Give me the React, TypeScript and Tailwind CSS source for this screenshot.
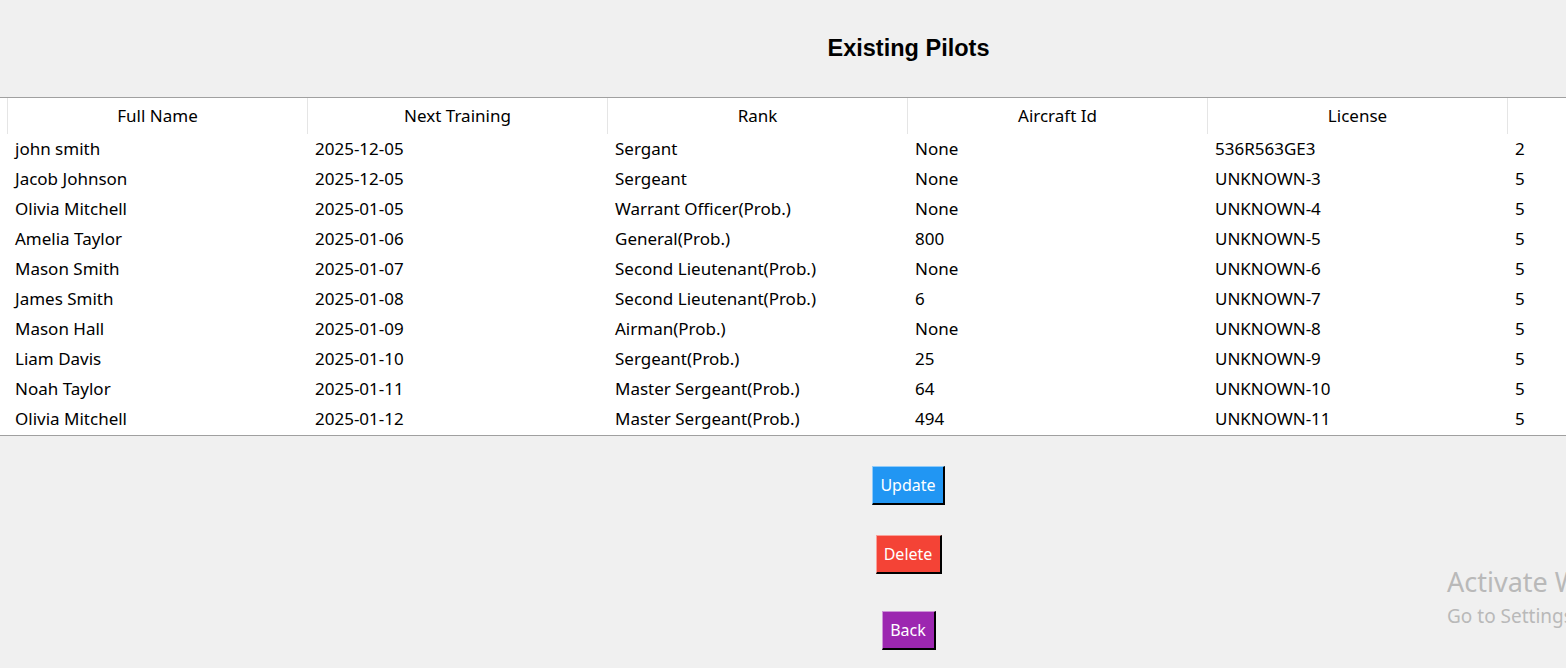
const rows = [
  ["john smith", "2025-12-05", "Sergant", "None", "536R563GE3", "2"],
  ["Jacob Johnson", "2025-12-05", "Sergeant", "None", "UNKNOWN-3", "5"],
  ["Olivia Mitchell", "2025-01-05", "Warrant Officer(Prob.)", "None", "UNKNOWN-4", "5"],
  ["Amelia Taylor", "2025-01-06", "General(Prob.)", "800", "UNKNOWN-5", "5"],
  ["Mason Smith", "2025-01-07", "Second Lieutenant(Prob.)", "None", "UNKNOWN-6", "5"],
  ["James Smith", "2025-01-08", "Second Lieutenant(Prob.)", "6", "UNKNOWN-7", "5"],
  ["Mason Hall", "2025-01-09", "Airman(Prob.)", "None", "UNKNOWN-8", "5"],
  ["Liam Davis", "2025-01-10", "Sergeant(Prob.)", "25", "UNKNOWN-9", "5"],
  ["Noah Taylor", "2025-01-11", "Master Sergeant(Prob.)", "64", "UNKNOWN-10", "5"],
  ["Olivia Mitchell", "2025-01-12", "Master Sergeant(Prob.)", "494", "UNKNOWN-11", "5"],
];

const headers = ["Full Name", "Next Training", "Rank", "Aircraft Id", "License", ""];

export default function App() {
  return (
    <div className="w-[1566px] h-[668px] overflow-hidden bg-[#f0f0f0] relative font-['Noto_Sans',sans-serif] text-[17px] text-black">
      <div className="w-[1817px] flex flex-col items-center">
        {/* title */}
        <div className="h-[97px] flex items-center justify-center pt-[1px]">
          <h1 className="font-['Liberation_Sans',Arial,sans-serif] font-bold text-[23.5px] text-black">Existing Pilots</h1>
        </div>

        {/* treeview */}
        <div className="w-full bg-white border-t border-b border-[#a0a0a0]">
          <div className="grid grid-cols-[8px_repeat(5,300px)_1fr] h-[36px]">
            <div className="border-r border-[#e5e5e5]" />
            {headers.map((h, i) => (
              <div key={i} className="flex items-center justify-center border-r border-[#e5e5e5]">{h}</div>
            ))}
          </div>
          {rows.map((r, i) => (
            <div key={i} className="grid grid-cols-[8px_repeat(5,300px)_1fr] h-[30px]">
              <div />
              {r.map((c, j) => (
                <div key={j} className="flex items-center pl-[7px] whitespace-nowrap">{c}</div>
              ))}
            </div>
          ))}
          <div className="h-px" />
        </div>

        {/* actions */}
        <button className="mt-[30px] w-[73px] h-[39px] text-[16px] bg-[#2196f3] text-white border-t border-l border-t-[#90cbf9] border-l-[#90cbf9] border-r-2 border-b-2 border-r-black border-b-black">Update</button>
        <button className="mt-[30px] w-[66px] h-[39px] text-[16px] bg-[#f44336] text-white border-t border-l border-t-[#f9a19a] border-l-[#f9a19a] border-r-2 border-b-2 border-r-black border-b-black">Delete</button>
        <button className="mt-[37px] w-[54px] h-[39px] text-[16px] bg-[#9c27b0] text-white border-t border-l border-t-[#cd93d7] border-l-[#cd93d7] border-r-2 border-b-2 border-r-black border-b-black">Back</button>
      </div>

      {/* windows activation watermark */}
      <div className="absolute left-[1447px] top-[568px] text-[#b9b9b9] whitespace-nowrap leading-none">
        <div className="text-[27px]">Activate Windows</div>
        <div className="text-[19px] mt-[12px]">Go to Settings to activate Windows.</div>
      </div>
    </div>
  );
}
